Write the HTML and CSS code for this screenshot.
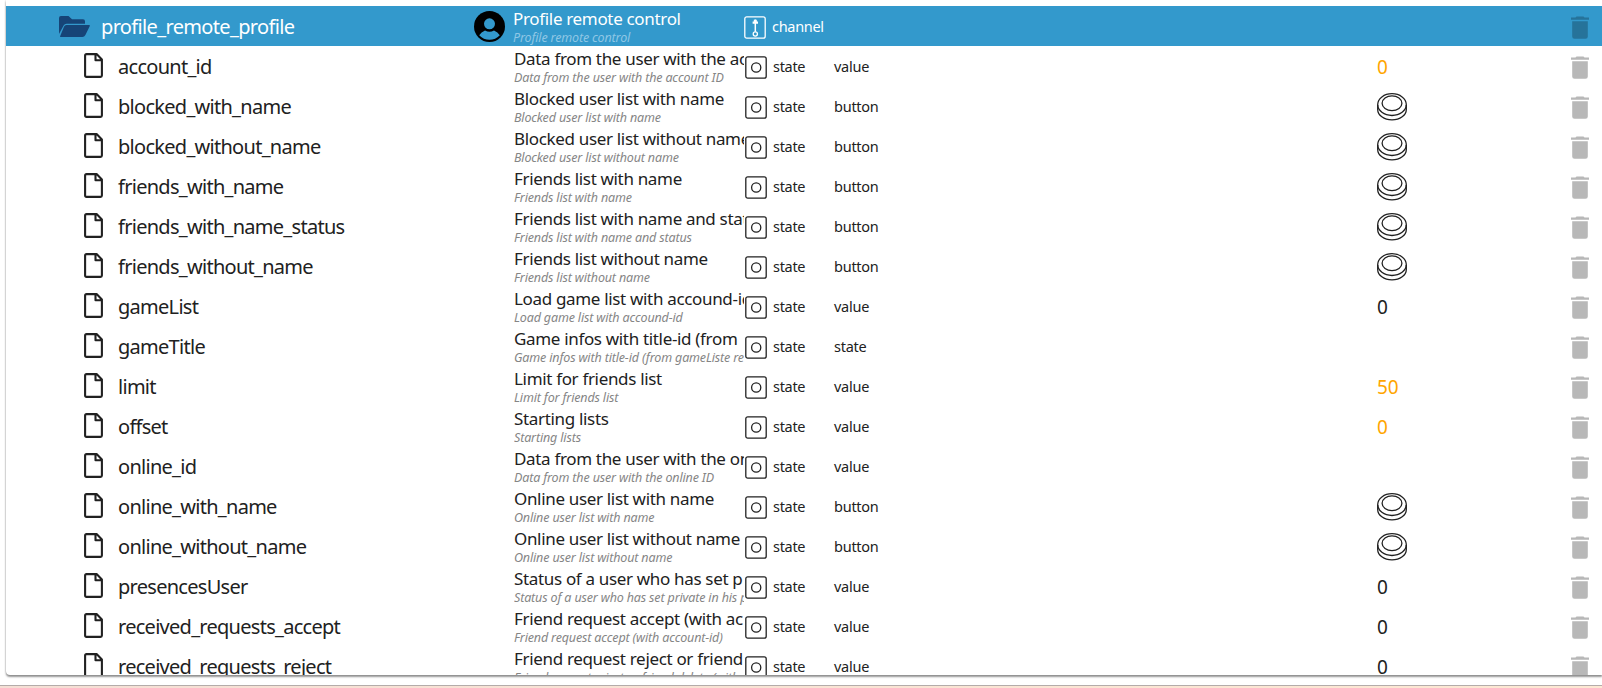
FILE: index.html
```
<!DOCTYPE html>
<html lang="en">
<head>
<meta charset="utf-8">
<title>Objects</title>
<link rel="stylesheet" href="styles.css">
</head>
<body>
<svg class="sprite" aria-hidden="true">
  <symbol id="file" viewBox="0 0 19 25"><path d="M3 1.1h9.6L17.9 6.400V22.500q0 1.400-1.400 1.400H2.500q-1.400 0-1.400-1.400V2.500Q1.100 1.100 2.500 1.100ZM11.500 1.200V7.200H17.700" fill="none" stroke="#212121" stroke-width="2.100" stroke-linejoin="round"/></symbol>
  <symbol id="state" viewBox="0 0 22 23"><rect x=".8" y=".8" width="20.400" height="21.400" rx="2" fill="none" stroke="currentColor" stroke-width="1.300"/><circle cx="11.200" cy="11.500" r="4.600" fill="none" stroke="currentColor" stroke-width="1.300"/></symbol>
  <symbol id="trash" viewBox="0 0 18 23"><path d="M5.500.5h7l1 1H18V3.800H0V1.500h4.500ZM1.200 5.300h15.600V20.500q0 2.300-2.300 2.300h-11q-2.300 0-2.300-2.300Z"/></symbol>
  <symbol id="press" viewBox="0 0 30 28"><g fill="none" stroke="#212121" stroke-width="1.300"><ellipse cx="15" cy="11.600" rx="14.300" ry="10.900"/><ellipse cx="15" cy="10.300" rx="9.900" ry="7.400"/><path d="M.7 12v4.500c0 5.700 6.200 10.400 14.300 10.400s14.300-4.700 14.300-10.400V12"/></g></symbol>
</svg>
<main class="panel">
  <div class="row selected">
    <div class="id"><svg class="folder" viewBox="0 0 31 21"><path d="M0 18V2Q0 0 2 0H9.500L13 3.200H24Q26 3.200 26 5.200V7.800H7.500Q5.600 7.800 4.600 9.500ZM7.400 9H30Q31.400 9 30.700 10.300L26.400 19Q25.400 21 23.400 21H2Q.6 21 1.300 19.700L5 10.700Q5.700 9 7.400 9Z" fill="#164477"/></svg><span>profile_remote_profile</span></div>
    <svg class="avatar" viewBox="0 0 31 31"><circle cx="15.500" cy="15.500" r="15.500"/><g fill="#3399cc"><circle cx="15.500" cy="12.800" r="5.500"/><path d="M5.200 24.200Q7.200 20.900 11 19.400Q15.500 22.200 20 19.400Q23.800 20.900 25.800 24.200Q21.500 28.800 15.500 28.800Q9.500 28.800 5.200 24.200Z"/></g></svg>
    <div class="name"><b>Profile remote control</b><i>Profile remote control</i></div>
    <div class="type"><svg viewBox="0 0 22 23" fill="none" stroke="currentColor" stroke-width="1.300"><rect x=".8" y=".8" width="20.400" height="21.400" rx="2"/><circle cx="11.300" cy="18" r="2.100"/><path d="M11.300 15.800V3.500" stroke-width="1.500"/><path d="M8.600 6.700h5.400M9.800 4.900h3" stroke-width="2.200"/></svg>channel</div><div class="role"></div><div class="value"></div><svg class="trash"><use href="#trash"/></svg>
  </div>
  <div class="row">
    <div class="id"><svg class="file"><use href="#file"/></svg><span>account_id</span></div>
    <div class="name"><b>Data from the user with the account ID</b><i>Data from the user with the account ID</i></div>
    <div class="type"><svg><use href="#state"/></svg>state</div><div class="role">value</div><div class="value pending">0</div><svg class="trash"><use href="#trash"/></svg>
  </div>
  <div class="row">
    <div class="id"><svg class="file"><use href="#file"/></svg><span>blocked_with_name</span></div>
    <div class="name"><b>Blocked user list with name</b><i>Blocked user list with name</i></div>
    <div class="type"><svg><use href="#state"/></svg>state</div><div class="role">button</div><div class="value"><svg><use href="#press"/></svg></div><svg class="trash"><use href="#trash"/></svg>
  </div>
  <div class="row">
    <div class="id"><svg class="file"><use href="#file"/></svg><span>blocked_without_name</span></div>
    <div class="name"><b>Blocked user list without name</b><i>Blocked user list without name</i></div>
    <div class="type"><svg><use href="#state"/></svg>state</div><div class="role">button</div><div class="value"><svg><use href="#press"/></svg></div><svg class="trash"><use href="#trash"/></svg>
  </div>
  <div class="row">
    <div class="id"><svg class="file"><use href="#file"/></svg><span>friends_with_name</span></div>
    <div class="name"><b>Friends list with name</b><i>Friends list with name</i></div>
    <div class="type"><svg><use href="#state"/></svg>state</div><div class="role">button</div><div class="value"><svg><use href="#press"/></svg></div><svg class="trash"><use href="#trash"/></svg>
  </div>
  <div class="row">
    <div class="id"><svg class="file"><use href="#file"/></svg><span>friends_with_name_status</span></div>
    <div class="name"><b>Friends list with name and status</b><i>Friends list with name and status</i></div>
    <div class="type"><svg><use href="#state"/></svg>state</div><div class="role">button</div><div class="value"><svg><use href="#press"/></svg></div><svg class="trash"><use href="#trash"/></svg>
  </div>
  <div class="row">
    <div class="id"><svg class="file"><use href="#file"/></svg><span>friends_without_name</span></div>
    <div class="name"><b>Friends list without name</b><i>Friends list without name</i></div>
    <div class="type"><svg><use href="#state"/></svg>state</div><div class="role">button</div><div class="value"><svg><use href="#press"/></svg></div><svg class="trash"><use href="#trash"/></svg>
  </div>
  <div class="row">
    <div class="id"><svg class="file"><use href="#file"/></svg><span>gameList</span></div>
    <div class="name"><b>Load game list with accound-id</b><i>Load game list with accound-id</i></div>
    <div class="type"><svg><use href="#state"/></svg>state</div><div class="role">value</div><div class="value">0</div><svg class="trash"><use href="#trash"/></svg>
  </div>
  <div class="row">
    <div class="id"><svg class="file"><use href="#file"/></svg><span>gameTitle</span></div>
    <div class="name"><b>Game infos with title-id (from</b><i>Game infos with title-id (from gameListe re</i></div>
    <div class="type"><svg><use href="#state"/></svg>state</div><div class="role">state</div><div class="value"></div><svg class="trash"><use href="#trash"/></svg>
  </div>
  <div class="row">
    <div class="id"><svg class="file"><use href="#file"/></svg><span>limit</span></div>
    <div class="name"><b>Limit for friends list</b><i>Limit for friends list</i></div>
    <div class="type"><svg><use href="#state"/></svg>state</div><div class="role">value</div><div class="value pending">50</div><svg class="trash"><use href="#trash"/></svg>
  </div>
  <div class="row">
    <div class="id"><svg class="file"><use href="#file"/></svg><span>offset</span></div>
    <div class="name"><b>Starting lists</b><i>Starting lists</i></div>
    <div class="type"><svg><use href="#state"/></svg>state</div><div class="role">value</div><div class="value pending">0</div><svg class="trash"><use href="#trash"/></svg>
  </div>
  <div class="row">
    <div class="id"><svg class="file"><use href="#file"/></svg><span>online_id</span></div>
    <div class="name"><b>Data from the user with the online ID</b><i>Data from the user with the online ID</i></div>
    <div class="type"><svg><use href="#state"/></svg>state</div><div class="role">value</div><div class="value"></div><svg class="trash"><use href="#trash"/></svg>
  </div>
  <div class="row">
    <div class="id"><svg class="file"><use href="#file"/></svg><span>online_with_name</span></div>
    <div class="name"><b>Online user list with name</b><i>Online user list with name</i></div>
    <div class="type"><svg><use href="#state"/></svg>state</div><div class="role">button</div><div class="value"><svg><use href="#press"/></svg></div><svg class="trash"><use href="#trash"/></svg>
  </div>
  <div class="row">
    <div class="id"><svg class="file"><use href="#file"/></svg><span>online_without_name</span></div>
    <div class="name"><b>Online user list without name</b><i>Online user list without name</i></div>
    <div class="type"><svg><use href="#state"/></svg>state</div><div class="role">button</div><div class="value"><svg><use href="#press"/></svg></div><svg class="trash"><use href="#trash"/></svg>
  </div>
  <div class="row">
    <div class="id"><svg class="file"><use href="#file"/></svg><span>presencesUser</span></div>
    <div class="name"><b>Status of a user who has set p</b><i>Status of a user who has set private in his p</i></div>
    <div class="type"><svg><use href="#state"/></svg>state</div><div class="role">value</div><div class="value">0</div><svg class="trash"><use href="#trash"/></svg>
  </div>
  <div class="row">
    <div class="id"><svg class="file"><use href="#file"/></svg><span>received_requests_accept</span></div>
    <div class="name"><b>Friend request accept (with ac</b><i>Friend request accept (with account-id)</i></div>
    <div class="type"><svg><use href="#state"/></svg>state</div><div class="role">value</div><div class="value">0</div><svg class="trash"><use href="#trash"/></svg>
  </div>
  <div class="row">
    <div class="id"><svg class="file"><use href="#file"/></svg><span>received_requests_reject</span></div>
    <div class="name"><b>Friend request reject or friend</b><i>Friend request reject or friend delete (with</i></div>
    <div class="type"><svg><use href="#state"/></svg>state</div><div class="role">value</div><div class="value">0</div><svg class="trash"><use href="#trash"/></svg>
  </div>
</main>
<footer class="bar"></footer>
</body>
</html>
```
FILE: styles.css
```
* { box-sizing: border-box; }
body {
  margin: 0;
  height: 688px;
  overflow: hidden;
  display: flex;
  flex-direction: column;
  background: #fff;
  color: #212121;
  font-family: "Noto Sans", "Open Sans", sans-serif;
}
.sprite { position: absolute; width: 0; height: 0; }
.panel {
  height: 675px;
  margin-left: 6px;
  padding-top: 6px;
  overflow: hidden;
  border-bottom-left-radius: 4px;
  box-shadow: 0 2px 2px rgba(0, 0, 0, .4), 0 0 2px rgba(0, 0, 0, .25);
  flex: none;
}
.row {
  height: 40px;
  display: grid;
  grid-template-columns: 508px 231px 89px 543px 194px 18px;
  align-items: center;
}
.row svg { display: block; flex: none; }
.selected {
  grid-template-columns: 468px 39px 231px 90px 543px 194px 18px;
  background: #3399cc;
  color: #fff;
}
.id {
  display: flex;
  align-items: center;
  padding-left: 78px;
  font-size: 20px;
  line-height: 28px;
  letter-spacing: -.72px;
  white-space: nowrap;
}
.id span { margin-top: 1px; }
.selected .id { padding-left: 53px; letter-spacing: -.65px; }
.folder { width: 31px; height: 21px; margin-right: 11px; }
.file { width: 19px; height: 25px; margin: 0 15px 1px 0; }
.avatar { width: 31px; height: 31px; }
.name {
  height: 40px;
  margin-right: 1px;
  overflow: hidden;
  white-space: nowrap;
}
.name b, .name i { display: block; }
.name b {
  font-weight: 400;
  font-size: 17px;
  line-height: 23px;
  height: 23px;
  padding-top: 1px;
  letter-spacing: -.33px;
}
.name i {
  font-size: 12.500px;
  line-height: 17px;
  color: #858585;
  letter-spacing: -.15px;
}
.selected i { color: #8fc7e5; }
.type { display: flex; align-items: center; font-size: 14.500px; letter-spacing: -.3px; }
.type svg { width: 22px; height: 23px; margin: 2px 6px 0 0; }
.role { font-size: 14.500px; letter-spacing: -.25px; }
.value { font-size: 19px; padding-top: 1px; }
.value svg { width: 30px; height: 28px; margin-top: 1px; }
.pending { color: #ffa500; }
.trash { width: 18px; height: 23px; margin-top: 3px; fill: #b8b8b8; }
.selected .trash { fill: #26739a; }
.bar {
  height: 3px;
  margin-top: 10px;
  border-top: 1px solid #b4acaa;
  background: linear-gradient(90deg, #f5dfd5, #fde8d3);
}
```
